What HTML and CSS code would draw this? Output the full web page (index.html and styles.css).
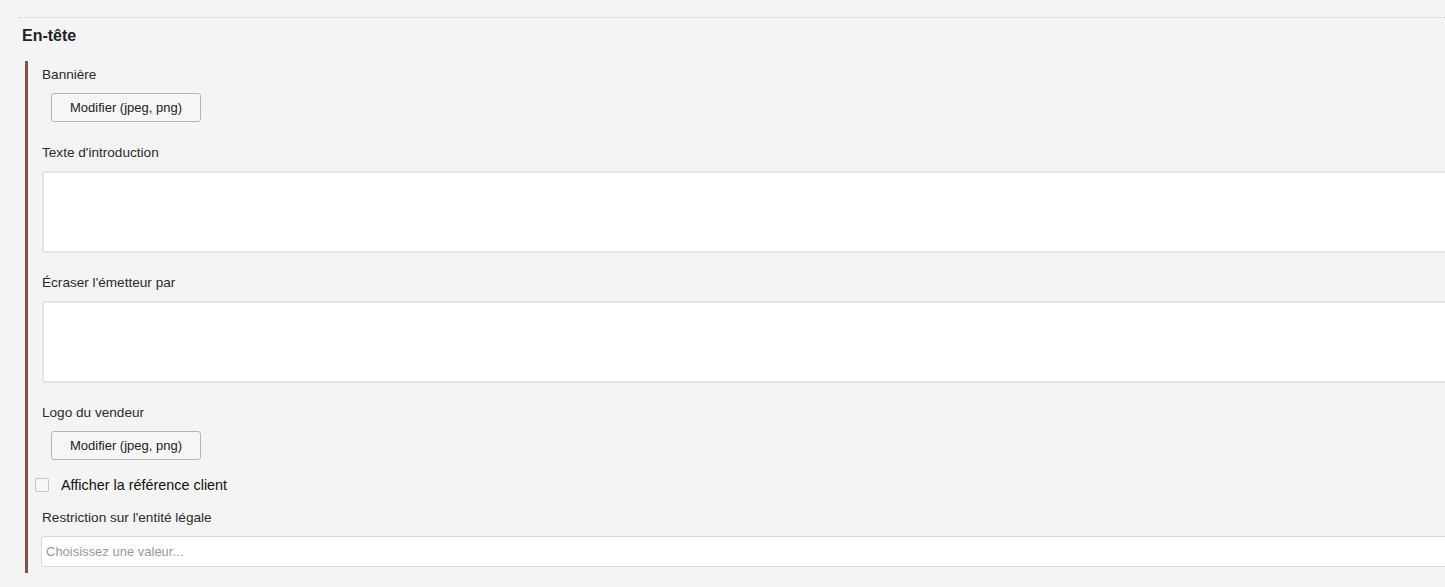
FILE: index.html
```html
<!DOCTYPE html>
<html lang="fr">
<head>
  <meta charset="UTF-8">
  <meta name="viewport" content="width=device-width, initial-scale=1.0">
  <title>En-tête</title>
  <link rel="stylesheet" href="styles.css">
</head>
<body>
  <div class="section">
    <h3 class="section-title">En-tête</h3>
    <div class="group">
      <div class="field">
        <label>Bannière</label>
        <button type="button" class="upload">Modifier (jpeg, png)</button>
      </div>
      <div class="field">
        <label>Texte d'introduction</label>
        <textarea></textarea>
      </div>
      <div class="field">
        <label>Écraser l'émetteur par</label>
        <textarea></textarea>
      </div>
      <div class="field">
        <label>Logo du vendeur</label>
        <button type="button" class="upload">Modifier (jpeg, png)</button>
      </div>
      <div class="check-row">
        <input type="checkbox" id="showRef">
        <label for="showRef">Afficher la référence client</label>
      </div>
      <div class="field last">
        <label>Restriction sur l'entité légale</label>
        <input type="text" class="picker" placeholder="Choisissez une valeur...">
      </div>
    </div>
  </div>
</body>
</html>
```

FILE: styles.css
```css
* { padding: 0; margin: 0; box-sizing: border-box; }

html, body {
  background: #f4f4f4;
  overflow: hidden;
}

body {
  font-family: "Liberation Sans", Arial, sans-serif;
  font-size: 13.6px;
  color: #2b2b2b;
  width: 1445px;
  height: 587px;
}

.section {
  margin-top: 17px;
  margin-left: 19px;
  border-top: 1px dotted #c8c8c8;
  width: 1500px;
}

.section-title {
  font-size: 16px;
  font-weight: bold;
  color: #222;
  line-height: 24px;
  padding: 6px 0 0 3px;
}

.group {
  margin-top: 13px;
  margin-left: 6px;
  border-left: 3px solid #7a5548;
  padding: 4px 0 6px 14px;
}

.field {
  display: flex;
  flex-direction: column;
  align-items: flex-start;
  margin-bottom: 20px;
}

.field:first-child {
  margin-bottom: 21px;
}

.field.last {
  margin-bottom: 0;
}

.field label {
  line-height: 20px;
  margin-bottom: 8px;
}

.upload {
  margin-left: 9px;
  width: 150px;
  height: 29px;
  font-family: inherit;
  font-size: 13px;
  color: #222;
  background: #f6f6f6;
  border: 1px solid #b4b4b4;
  border-radius: 3px;
}

textarea {
  width: 1460px;
  height: 82px;
  background: #fff;
  border: 2px solid #e4e4e4;
  border-radius: 3px;
  resize: none;
}

.check-row {
  display: flex;
  align-items: center;
  margin: -6px 0 12px -7px;
  height: 22px;
  font-size: 14.4px;
  color: #111;
}

.check-row input {
  appearance: none;
  width: 14px;
  height: 14px;
  border: 1px solid #c4c4c4;
  border-radius: 2px;
  background: #f7f7f7;
  margin-right: 12px;
}

.picker {
  margin-left: -1px;
  width: 1460px;
  height: 31px;
  padding: 0 4px;
  font-family: inherit;
  font-size: 13px;
  background: #fff;
  border: 1px solid #d8d8d8;
  border-radius: 3px;
}

.picker::placeholder {
  color: #999;
}
```
